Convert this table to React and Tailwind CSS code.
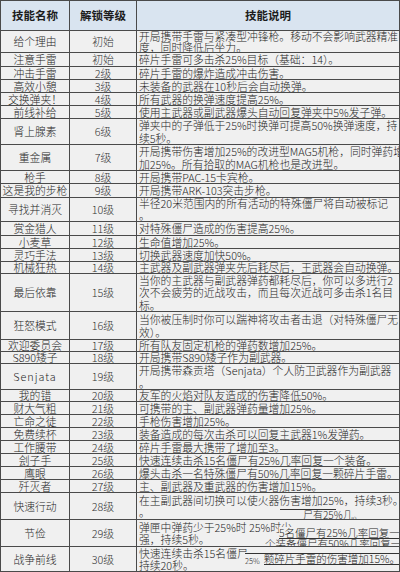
import React from "react";

const rows = [
  { n: "给个理由", l: "初始", d: ["开局携带手雷与紧凑型冲锋枪。移动不会影响武器精准", "度，同时降低后坐力。"], h: "h-[22px]", lead: "leading-[10.5px]" },
  { n: "注意手雷", l: "初始", d: ["碎片手雷可多击杀25%目标（基础：14）。"], h: "h-[14px]" },
  { n: "冲击手雷", l: "2级", d: ["碎片手雷的爆炸造成冲击伤害。"], h: "h-[13px]" },
  { n: "高效小憩", l: "3级", d: ["未装备的武器在10秒后会自动换弹。"], h: "h-[13px]" },
  { n: "交换弹夹！", l: "4级", d: ["所有武器的换弹速度提高25%。"], h: "h-[13px]" },
  { n: "前线补给", l: "5级", d: ["使用主武器或副武器爆头自动回复弹夹中5%发子弹。"], h: "h-[13px]" },
  { n: "肾上腺素", l: "6级", d: ["弹夹中的子弹低于25%时换弹可提高50%换弹速度，持", "续5秒。"], h: "h-[26px]" },
  { n: "重金属", l: "7级", d: ["开局携带伤害增加25%的改进型MAG5机枪，同时弹药增", "加25%。所有拾取的MAG机枪也是改进型。"], h: "h-[26px]" },
  { n: "枪手", l: "8级", d: ["开局携带PAC-15卡宾枪。"], h: "h-[13px]" },
  { n: "这是我的步枪", l: "9级", d: ["开局携带ARK-103突击步枪。"], h: "h-[14px]" },
  { n: "寻找并消灭", l: "10级", d: ["半径20米范围内的所有活动的特殊僵尸将自动被标记", "。"], h: "h-[24px]", lead: "leading-[11.5px]" },
  { n: "赏金猎人", l: "11级", d: ["对特殊僵尸造成的伤害提高25%。"], h: "h-[14px]" },
  { n: "小麦草", l: "12级", d: ["生命值增加25%。"], h: "h-[13px]" },
  { n: "灵巧手法", l: "13级", d: ["切换武器速度加快50%。"], h: "h-[13px]" },
  { n: "机械狂热", l: "14级", d: ["主武器及副武器弹夹先后耗尽后，王武器会自动换弹。"], h: "h-[12px]" },
  { n: "最后依靠", l: "15级", d: ["当你的主武器与副武器弹药都耗尽后，你可以多进行2", "次不会疲劳的近战攻击，而且每次近战可多击杀1名目", "标。"], h: "h-[38px]", lead: "leading-[12.3px]" },
  { n: "狂怒模式", l: "16级", d: ["当你被压制时你可以踹神将攻击者击退（对特殊僵尸无", "效）。"], h: "h-[28px]", lead: "leading-[13px]" },
  { n: "欢迎委员会", l: "17级", d: ["所有队友固定机枪的弹药数增加25%。"], h: "h-[12px]" },
  { n: "S890矮子", l: "18级", d: ["开局携带S890矮子作为副武器。"], h: "h-[12px]" },
  { n: "Senjata", l: "19级", d: ["开局携带森贡塔（Senjata）个人防卫武器作为副武器", "。"], h: "h-[26px]", sen: true },
  { n: "我的错", l: "20级", d: ["友军的火焰对队友造成的伤害降低50%。"], h: "h-[12px]" },
  { n: "财大气粗", l: "21级", d: ["可携带的主、副武器弹药量增加25%。"], h: "h-[13px]" },
  { n: "亡命之徒", l: "22级", d: ["手枪伤害增加25%。"], h: "h-[13px]" },
  { n: "免费续杯", l: "23级", d: ["装备造成的每次击杀可以回复主武器1%发弹药。"], h: "h-[13px]" },
  { n: "工作腰带", l: "24级", d: ["碎片手雷最大携带了增加至3。"], h: "h-[13px]" },
  { n: "刽子手", l: "25级", d: ["快速连续击杀15名僵尸有25%几率回复一个装备。"], h: "h-[13px]" },
  { n: "鹰眼", l: "26级", d: ["爆头击杀一名特殊僵尸有50%几率回复一颗碎片手雷。"], h: "h-[13px]" },
  { n: "歼灭者", l: "27级", d: ["主、副武器及重武器的伤害增加15%。"], h: "h-[13px]" },
  { n: "快速行动", l: "28级", d: ["在主副武器间切换可以使火器伤害增加25%，持续3秒。", "。"], h: "h-[27px]", ov: "a" },
  { n: "节俭", l: "29级", d: ["弹匣中弹药少于25%时 25%时少", "强，持续5秒。"], h: "h-[27px]", ov: "b" },
  { n: "战争前线", l: "30级", d: ["快速连续击杀15名僵尸", "持续20秒。"], h: "h-[25px]", ov: "c" },
];

const font = { fontFamily: '"Noto Sans CJK SC", "Noto Sans", sans-serif' };

function Overlay({ kind }) {
  if (kind === "a") {
    return (
      <>
        <span className="absolute left-[143px] top-[16px] w-[56px] border-t border-[#333]" />
        <span className="absolute left-[165px] top-[17px] bg-[#f0f0f0] border-b border-[#333] px-[1px] text-[10px] leading-[9px] whitespace-nowrap">尸有25%几。</span>
      </>
    );
  }
  if (kind === "b") {
    return (
      <div className="absolute left-[128px] top-[7px] flex flex-col items-start">
        <span className="ml-[14px] bg-[#f0f0f0] border-b border-[#333] text-[10.5px] leading-[11px] whitespace-nowrap pr-2">5名僵尸有25%几率回复一</span>
        <span className="bg-[#f0f0f0] border-b border-[#333] text-[10.5px] leading-[9px] whitespace-nowrap pr-2">个装备僵尸有50%几率回复一</span>
      </div>
    );
  }
  if (kind === "c") {
    return (
      <div className="absolute left-[108px] top-[6px] flex items-start border-t border-[#333]">
        <span className="mt-[2px] text-[7.5px] leading-[9px] whitespace-nowrap">25%</span>
        <span className="ml-[4px] bg-[#f0f0f0] border-b border-[#333] text-[10.5px] leading-[10px] whitespace-nowrap">颗碎片手雷</span>
        <span className="bg-[#f0f0f0] border-b border-[#333] text-[10.5px] leading-[10px] whitespace-nowrap pr-1">的伤害增加15%。</span>
      </div>
    );
  }
  return null;
}

export default function App() {
  return (
    <div className="w-[400px] h-[572px] bg-white overflow-hidden text-[#262626] font-light" style={font}>
      <div className="border-l border-r border-t border-[#4a4a4a] w-[400px]">
        <div className="flex h-[30px] bg-[#d9e4f0] border-b border-[#4a4a4a] font-bold text-[11.5px] text-[#1c1c1c]">
          <div className="w-[69px] border-r border-[#4a4a4a] flex items-center justify-center">技能名称</div>
          <div className="w-[67px] border-r border-[#4a4a4a] flex items-center justify-center">解锁等级</div>
          <div className="flex-1 flex items-center justify-center">技能说明</div>
        </div>
        {rows.map((r, i) => (
          <div key={i} className={`flex ${r.h} bg-[#f0f0f0] border-b border-[#4a4a4a] text-[10.8px]`}>
            <div className={`w-[69px] shrink-0 border-r border-[#4a4a4a] flex items-center justify-center whitespace-nowrap leading-[11px] ${r.sen ? "tracking-[1px]" : ""}`}>
              {r.n}
            </div>
            <div className="w-[67px] shrink-0 border-r border-[#4a4a4a] flex items-center justify-center whitespace-nowrap leading-[11px] text-[#333]">
              {r.l}
            </div>
            <div className={`relative flex-1 overflow-hidden flex flex-col justify-center pl-[2px] ${r.lead || (r.d.length > 1 ? "leading-[12.5px]" : "leading-[11px]")}`}>
              {r.d.map((t, j) => (
                <div key={j} className="whitespace-nowrap">{t}</div>
              ))}
              {r.ov && <Overlay kind={r.ov} />}
            </div>
          </div>
        ))}
      </div>
    </div>
  );
}
